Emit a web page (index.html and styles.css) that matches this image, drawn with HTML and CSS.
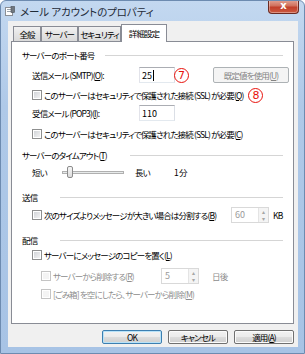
FILE: index.html
```html
<!DOCTYPE html>
<html lang="ja">
<head>
    <meta charset="UTF-8">
    <title>メール アカウントのプロパティ</title>
    <link rel="stylesheet" href="styles.css">
</head>
<body>

    <div class="window">
        <!-- タイトルバー -->
        <div class="titlebar">
            <svg class="app-icon" width="10" height="10" viewBox="0 0 10 10">
                <rect x="0.5" y="1.5" width="7" height="8" fill="#fff" stroke="#8a8f96"/>
                <rect x="2" y="3" width="4" height="1" fill="#9aa3ad"/>
                <rect x="2" y="5" width="4" height="1" fill="#9aa3ad"/>
                <rect x="6" y="0.5" width="3.5" height="6" fill="#6f7780" stroke="#4a5058" stroke-width="0.6"/>
            </svg>
            <span class="title">メール アカウントのプロパティ</span>
            <div class="close-btn">x</div>
        </div>

        <div class="client">
            <!-- タブ -->
            <div class="tabs">
                <div class="tab w-general">全般</div>
                <div class="tab w-server">サーバー</div>
                <div class="tab w-security">セキュリティ</div>
                <div class="tab active">詳細設定</div>
            </div>

            <div class="panel">
                <div class="group-head mt-7"><span class="head-port">サーバーのポート番号</span></div>

                <div class="row mt-6">
                    <span class="field-label">送信メール (SMTP)(<u>O</u>):</span>
                    <div class="textbox">25<span class="caret"></span></div>
                    <span class="mark">7</span>
                    <span class="btn btn-disabled">既定値を使用(<u>U</u>)</span>
                </div>

                <div class="check-row mt-5">
                    <span class="check"></span>
                    <span>このサーバーはセキュリティで保護された接続 (SSL) が必要(<u>Q</u>)</span>
                    <span class="mark mark-ssl">8</span>
                </div>

                <div class="row mt-3">
                    <span class="field-label">受信メール (POP3)(<u>I</u>):</span>
                    <div class="textbox">110</div>
                </div>

                <div class="check-row mt-6">
                    <span class="check"></span>
                    <span>このサーバーはセキュリティで保護された接続 (SSL) が必要(<u>C</u>)</span>
                </div>

                <div class="group-head mt-8"><span class="head-timeout">サーバーのタイムアウト(<u>T</u>)</span></div>

                <div class="row slider-row mt-3">
                    <span class="short">短い</span>
                    <div class="slider"><span class="thumb"></span></div>
                    <span class="long">長い</span>
                    <span>1 分</span>
                </div>

                <div class="group-head mt-11"><span class="head-short">送信</span></div>

                <div class="row mt-4">
                    <span class="check"></span>
                    <span class="split-label">次のサイズよりメッセージが大きい場合は分割する(<u>B</u>)</span>
                    <div class="spin">
                        <span class="spin-value">60</span>
                        <span class="spin-buttons"><span>&#9652;</span><span>&#9662;</span></span>
                    </div>
                    <span class="unit">KB</span>
                </div>

                <div class="group-head mt-11"><span class="head-short">配信</span></div>

                <div class="check-row mt-2">
                    <span class="check"></span>
                    <span>サーバーにメッセージのコピーを置く(<u>L</u>)</span>
                </div>

                <div class="row sub mt-6">
                    <span class="check check-disabled"></span>
                    <span class="disabled delete-label">サーバーから削除する(<u>R</u>)</span>
                    <div class="spin">
                        <span class="spin-value">5</span>
                        <span class="spin-buttons"><span>&#9652;</span><span>&#9662;</span></span>
                    </div>
                    <span class="disabled unit-days">日後</span>
                </div>

                <div class="check-row sub mt-3">
                    <span class="check check-disabled"></span>
                    <span class="disabled">[ごみ箱] を空にしたら、サーバーから削除(<u>M</u>)</span>
                </div>
            </div>

            <!-- ボタン -->
            <div class="buttons">
                <span class="btn btn-default">OK</span>
                <span class="btn">キャンセル</span>
                <span class="btn">適用(<u>A</u>)</span>
            </div>
        </div>
    </div>

</body>
</html>
```

FILE: styles.css
```css
* {
    box-sizing: border-box;
}

body {
    margin: 0;
    font-family: "Noto Sans CJK JP", "Noto Sans", sans-serif;
    font-size: 8.5px;
    font-feature-settings: "palt" 1;
    letter-spacing: -0.85px;
    white-space: nowrap;
    color: #000;
}

u {
    text-decoration: underline;
    text-underline-offset: 1px;
}

.window {
    width: 305px;
    height: 354px;
    display: flex;
    flex-direction: column;
    background: linear-gradient(#c3d8f0, #afc9e8 30%, #a7c3e5);
    border: 1px solid #6d8bb0;
    border-radius: 6px 6px 0 0;
    padding: 0 6px 6px 7px;
    overflow: hidden;
}

/* タイトルバー */
.titlebar {
    height: 20px;
    margin: 0 -6px 0 -7px;
    padding: 0 5px 0 4px;
    display: flex;
    align-items: center;
}

.app-icon {
    margin-right: 5px;
}

.title {
    font-size: 10.5px;
    letter-spacing: -0.1px;
    color: #1e2a38;
}

.close-btn {
    margin-left: auto;
    align-self: flex-start;
    margin-top: -1px;
    width: 31px;
    height: 14px;
    border: 1px solid #6b2a22;
    border-top: none;
    border-radius: 0 0 4px 4px;
    background: linear-gradient(#e3a597, #d0705c 45%, #c13f2b 55%, #cc5a40);
    box-shadow: inset 0 0 0 1px rgba(255, 255, 255, 0.35);
    color: #fff;
    font-family: "DejaVu Sans", sans-serif;
    font-weight: bold;
    font-size: 10px;
    line-height: 12px;
    letter-spacing: 0;
    text-align: center;
}

.client {
    flex: 1;
    display: flex;
    flex-direction: column;
    background-color: #f0f0f0;
    padding: 3px 4px 0 3px;
}

/* タブ */
.tabs {
    height: 17px;
    display: flex;
    align-items: flex-end;
    padding-left: 2px;
}

.tab {
    height: 15px;
    border: 1px solid #898c95;
    border-bottom: none;
    background: linear-gradient(#f2f2f2, #e4e4e4 50%, #dadada);
    display: flex;
    align-items: center;
    justify-content: center;
    flex-shrink: 0;
    letter-spacing: -0.9px;
}

.w-general { width: 28px; }
.w-server { width: 37px; }
.w-security { width: 43px; }

.tab.active {
    width: 46px;
    height: 18px;
    margin-bottom: -1px;
    background: #fff;
    position: relative;
    z-index: 1;
    padding-bottom: 2px;
}

.panel {
    height: 283px;
    border: 1px solid #898c95;
    background-color: #fff;
    padding: 0 10px;
}

.group-head {
    height: 12px;
    display: flex;
    align-items: center;
}

.group-head span {
    flex-shrink: 0;
}

.group-head::after {
    content: "";
    flex: 1;
    border-top: 1px solid #d5d5d5;
}

.head-port { width: 83px; }
.head-timeout { width: 108px; }
.head-short { width: 38px; }

.row {
    height: 16px;
    display: flex;
    align-items: center;
    padding-left: 10px;
}

.check-row {
    height: 14px;
    display: flex;
    align-items: center;
    padding-left: 10px;
}

.row > *,
.check-row > * {
    flex-shrink: 0;
}

.sub {
    padding-left: 19px;
}

.mt-2 { margin-top: 2px; }
.mt-3 { margin-top: 3px; }
.mt-4 { margin-top: 4px; }
.mt-5 { margin-top: 5px; }
.mt-6 { margin-top: 6px; }
.mt-7 { margin-top: 7px; }
.mt-8 { margin-top: 8px; }
.mt-11 { margin-top: 11px; }

.field-label {
    width: 107px;
}

.textbox {
    width: 36px;
    height: 16px;
    border: 1px solid #abadb3;
    border-left-color: #e2e3ea;
    border-right-color: #dbdfe6;
    border-bottom-color: #e3e9ef;
    padding-left: 2px;
    display: flex;
    align-items: center;
    letter-spacing: 0;
    font-size: 9px;
}

.caret {
    width: 1px;
    height: 11px;
    background-color: #000;
    margin-left: 1px;
}

/* 注記の丸数字 */
.mark {
    width: 15px;
    height: 15px;
    border: 1px solid #e8120c;
    border-radius: 50%;
    color: #e8120c;
    font-family: "DejaVu Sans", sans-serif;
    font-size: 11px;
    line-height: 13px;
    letter-spacing: 0;
    text-align: center;
    margin-left: -1px;
    position: relative;
}

.mark-ssl {
    margin-left: 5px;
}

.btn {
    width: 60px;
    height: 14px;
    border: 1px solid #707070;
    border-radius: 2px;
    background: linear-gradient(#f2f2f2, #ebebeb 50%, #dddddd 50%, #cfcfcf);
    box-shadow: inset 0 0 0 1px #fbfbfb;
    display: flex;
    align-items: center;
    justify-content: center;
}

.btn-disabled {
    width: 76px;
    height: 16px;
    margin-left: 24px;
    border-color: #adb2b5;
    background: #f4f4f4;
    box-shadow: none;
    color: #838383;
}

.btn-default {
    border-color: #3c7fb1;
    box-shadow: inset 0 0 0 1px #b8e2f8;
}

.check {
    width: 10px;
    height: 10px;
    border: 1px solid #8e8f8f;
    background: linear-gradient(135deg, #cdd0d4, #f6f6f6);
    box-shadow: inset 0 0 0 1px #fff;
    margin-right: 2px;
}

.check-disabled {
    border-color: #c4c4c4;
    background: #f4f4f4;
}

.disabled {
    color: #8d8d8d;
}

/* スライダー */
.short {
    width: 30px;
}

.slider {
    width: 62px;
    height: 3px;
    border: 1px solid #b0b0b0;
    background-color: #e7eaea;
    position: relative;
}

.thumb {
    position: absolute;
    left: 4px;
    top: -6px;
    width: 6px;
    height: 12px;
    border: 1px solid #8b8b8b;
    border-radius: 2px;
    background: linear-gradient(#f6f6f6, #dcdcdc);
}

.long {
    margin-left: 11px;
    width: 39px;
}

/* スピンボックス */
.split-label {
    width: 187px;
}

.spin {
    width: 38px;
    height: 16px;
    border: 1px solid #d9d9d9;
    background-color: #fff;
    display: flex;
}

.spin-value {
    flex: 1;
    color: #9a9a9a;
    padding-left: 3px;
    line-height: 14px;
    letter-spacing: 0;
    font-size: 9px;
}

.spin-buttons {
    width: 10px;
    display: flex;
    flex-direction: column;
    border-left: 1px solid #e4e4e4;
}

.spin-buttons span {
    flex: 1;
    font-family: "DejaVu Sans", sans-serif;
    font-size: 6px;
    line-height: 7px;
    letter-spacing: 0;
    text-align: center;
    color: #a6a6a6;
    background-color: #f4f4f4;
}

.unit {
    margin-left: 4px;
}

.delete-label {
    width: 108px;
}

.unit-days {
    margin-left: 13px;
}

.buttons {
    margin-top: 6px;
    display: flex;
    justify-content: flex-end;
    gap: 6px;
}
```
